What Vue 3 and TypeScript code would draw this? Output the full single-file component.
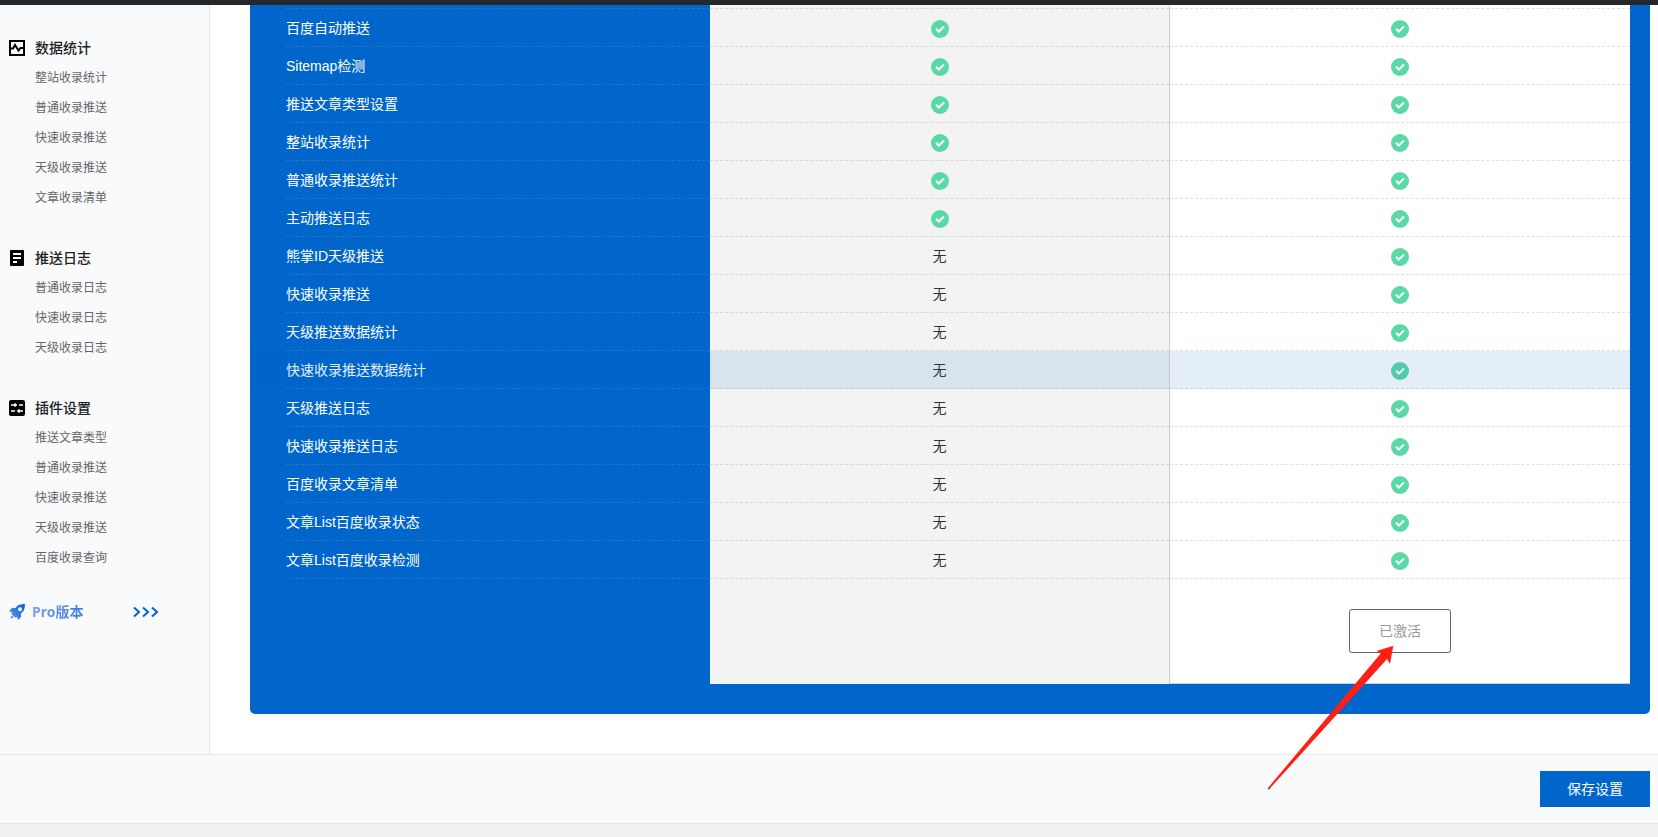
<script setup lang="ts">
interface MenuGroup {
  title: string
  icon: 'stats' | 'log' | 'settings'
  items: string[]
}

interface Feature {
  name: string
  free: boolean
  active?: boolean
}

const groups: MenuGroup[] = [
  {
    title: '数据统计',
    icon: 'stats',
    items: ['整站收录统计', '普通收录推送', '快速收录推送', '天级收录推送', '文章收录清单'],
  },
  {
    title: '推送日志',
    icon: 'log',
    items: ['普通收录日志', '快速收录日志', '天级收录日志'],
  },
  {
    title: '插件设置',
    icon: 'settings',
    items: ['推送文章类型', '普通收录推送', '快速收录推送', '天级收录推送', '百度收录查询'],
  },
]

const features: Feature[] = [
  { name: '百度自动推送', free: true },
  { name: 'Sitemap检测', free: true },
  { name: '推送文章类型设置', free: true },
  { name: '整站收录统计', free: true },
  { name: '普通收录推送统计', free: true },
  { name: '主动推送日志', free: true },
  { name: '熊掌ID天级推送', free: false },
  { name: '快速收录推送', free: false },
  { name: '天级推送数据统计', free: false },
  { name: '快速收录推送数据统计', free: false, active: true },
  { name: '天级推送日志', free: false },
  { name: '快速收录推送日志', free: false },
  { name: '百度收录文章清单', free: false },
  { name: '文章List百度收录状态', free: false },
  { name: '文章List百度收录检测', free: false },
]
</script>

<template>
  <div class="page">
    <div class="admin-bar"></div>
    <div class="body">
      <nav class="sidebar">
        <section v-for="group in groups" :key="group.title" class="group">
          <h2 class="group-title">
            <svg v-if="group.icon === 'stats'" class="icon" viewBox="0 0 16 16" aria-hidden="true">
              <rect x="1" y="1" width="14" height="14" fill="none" stroke="#000" stroke-width="2" />
              <path d="M1.500 8.500H4L6 5L9.500 10.500L11.500 8H14.500" fill="none" stroke="#000" stroke-width="2" />
            </svg>
            <svg v-else-if="group.icon === 'log'" class="icon" viewBox="0 0 16 16" aria-hidden="true">
              <rect x="1" width="14" height="16" rx="1" />
              <path d="M4 4H12M4 8H12M4 12H8" stroke="#fff" stroke-width="1.800" />
            </svg>
            <svg v-else class="icon" viewBox="0 0 16 16" aria-hidden="true">
              <rect width="16" height="16" rx="2" />
              <path d="M2 5H8M10 5H14M2 11H6M8 11H14" stroke="#fff" stroke-width="1.600" />
              <path d="M6 3.200V6.800M10 9.200V12.800" stroke="#fff" stroke-width="1.600" />
            </svg>
            <span>{{ group.title }}</span>
          </h2>
          <ul class="links">
            <li v-for="item in group.items" :key="item"><a href="#">{{ item }}</a></li>
          </ul>
        </section>
        <a class="pro" href="#">
          <svg class="icon" viewBox="0 0 16 16" aria-hidden="true">
            <defs>
              <linearGradient id="rocket" x1="0" y1="1" x2="1" y2="0">
                <stop offset="0" stop-color="#6d94f0" />
                <stop offset="1" stop-color="#0066cc" />
              </linearGradient>
            </defs>
            <path
              fill="url(#rocket)"
              fill-rule="evenodd"
              d="M16 0C12 0 8.500 .800 6.500 4H3L0 7.200L3 8.200L2.500 10L5.800 13.500L7.800 13L9.500 16L12 13V9.500C15 7.500 16 4.500 16 0ZM11 3.300A2 2 0 1 1 11 7.300A2 2 0 1 1 11 3.300ZM2.800 11.500L1.300 13.800L2.200 14.600L4.600 13.200Z"
            />
          </svg>
          <span class="pro-label">Pro版本</span>
          <svg class="chevrons" viewBox="0 0 26 12" aria-hidden="true">
            <path d="M1 1.500L6 6L1 10.500M10 1.500L15 6L10 10.500M19 1.500L24 6L19 10.500" fill="none" stroke="#0066cc" stroke-width="2" />
          </svg>
        </a>
      </nav>

      <main class="content">
        <div class="panel">
          <table class="compare">
            <tbody>
              <tr class="lead" aria-hidden="true">
                <td class="name"><div></div></td>
                <td class="free"><div></div></td>
                <td class="paid"><div></div></td>
              </tr>
              <tr v-for="f in features" :key="f.name" :class="{ active: f.active }">
                <th scope="row" class="name"><div>{{ f.name }}</div></th>
                <td class="free">
                  <div>
                    <svg v-if="f.free" class="check" viewBox="0 0 18 18" role="img" aria-label="有">
                      <circle cx="9" cy="9" r="9" fill="#5ad8a6" />
                      <path d="M5 8.800L7.800 11.500L13 6.500" fill="none" stroke="#fff" stroke-width="2" />
                    </svg>
                    <template v-else>无</template>
                  </div>
                </td>
                <td class="paid">
                  <div>
                    <svg class="check" viewBox="0 0 18 18" role="img" aria-label="有">
                      <circle cx="9" cy="9" r="9" fill="#5ad8a6" />
                      <path d="M5 8.800L7.800 11.500L13 6.500" fill="none" stroke="#fff" stroke-width="2" />
                    </svg>
                  </div>
                </td>
              </tr>
            </tbody>
            <tfoot>
              <tr>
                <td></td>
                <td class="free"></td>
                <td class="paid last">
                  <span class="action">
                    <button type="button" class="activated">已激活</button>
                    <svg class="pointer" viewBox="0 0 128 146" aria-hidden="true">
                      <path d="M126.300 .700L109.700 6L113.700 8.500L.500 143.500L1.800 144.700L120 14L123 19Z" fill="#ff2013" />
                    </svg>
                  </span>
                </td>
              </tr>
            </tfoot>
          </table>
        </div>
      </main>
    </div>
    <footer class="footer">
      <button type="button" class="save">保存设置</button>
    </footer>
  </div>
</template>

<style>
body {
  margin: 0;
  background: #f0f0f0;
}
</style>

<style scoped>
.page {
  min-height: 100vh;
  font-family: "Liberation Sans", "Noto Sans CJK SC", sans-serif;
  font-size: 14px;
  color: #333;
}
.admin-bar {
  height: 5px;
  background: #23282d;
}
.body {
  display: flex;
  background: #fff;
}
.sidebar {
  box-sizing: border-box;
  flex: 0 0 210px;
  padding-top: 28px;
  border-right: 1px solid #e5e5e5;
  background: #f9fafc;
  font-family: "Noto Sans", "Noto Sans CJK SC", sans-serif;
}
.group {
  margin-bottom: 30px;
}
.group-title {
  display: flex;
  align-items: center;
  gap: 10px;
  margin: 0;
  padding-left: 9px;
  font-size: 14px;
  font-weight: 500;
  line-height: 30px;
  color: #222;
}
.icon {
  flex: none;
  width: 16px;
  height: 16px;
}
.links {
  margin: 0;
  padding: 0 0 0 35px;
  list-style: none;
}
.links li {
  height: 30px;
  font-size: 12px;
  line-height: 30px;
}
.links a {
  color: #666;
  text-decoration: none;
}
.pro {
  display: flex;
  align-items: center;
  margin-top: -6px;
  padding-left: 9px;
  line-height: 30px;
  text-decoration: none;
}
.pro-label {
  margin: 0 50px 0 7px;
  font-weight: 700;
  color: transparent;
  background: linear-gradient(90deg, #7d9bf2, #3b7ce0);
  background-clip: text;
  -webkit-background-clip: text;
}
.chevrons {
  width: 26px;
  height: 12px;
}
.content {
  flex: 1;
  min-width: 0;
  padding: 0 8px 40px 40px;
}
.panel {
  padding: 0 20px 30px 0;
  border-radius: 0 0 5px 5px;
  background: #0066cc;
}
.compare {
  width: 100%;
  table-layout: fixed;
  border-collapse: separate;
  border-spacing: 0;
}
.compare td,
.compare th {
  padding: 0;
  font-weight: 400;
}
.compare tbody div {
  box-sizing: border-box;
  display: flex;
  align-items: center;
  justify-content: center;
  height: 38px;
  padding-bottom: 2px;
  border-bottom: 1px dashed rgba(153, 153, 153, 0.3);
}
.compare .lead div {
  height: 4px;
}
.compare .name div {
  justify-content: flex-start;
  margin-left: 36px;
  color: #fff;
}
.compare .free {
  border-right: 1px solid #ccc;
  background: #f3f3f3;
}
.compare .paid {
  background: #fff;
}
.active td,
.active th {
  position: relative;
}
.active td::after,
.active th::after {
  content: "";
  position: absolute;
  inset: 0;
  background: rgba(0, 102, 204, 0.11);
}
.check {
  width: 18px;
  height: 18px;
  margin-top: 4px;
}
.compare .last {
  padding: 30px 0;
  border-bottom: 1px solid #ccc;
  text-align: center;
}
.action {
  position: relative;
  display: inline-block;
  vertical-align: top;
}
.activated {
  display: block;
  box-sizing: border-box;
  width: 102px;
  height: 44px;
  padding: 0 0 2px;
  border: 1px solid #666;
  border-radius: 3px;
  background: #fff;
  color: #999;
  font: inherit;
}
.pointer {
  position: absolute;
  z-index: 5;
  top: 36px;
  left: -82px;
  width: 128px;
  height: 146px;
  pointer-events: none;
}
.footer {
  display: flex;
  justify-content: flex-end;
  padding: 16px 8px;
  border-top: 1px solid #e8e8e8;
  border-bottom: 1px solid #e8e8e8;
  background: #f9fafc;
}
.save {
  width: 110px;
  height: 36px;
  padding: 0 0 2px;
  border: 0;
  background: #0066cc;
  color: #fff;
  font: inherit;
}
</style>
